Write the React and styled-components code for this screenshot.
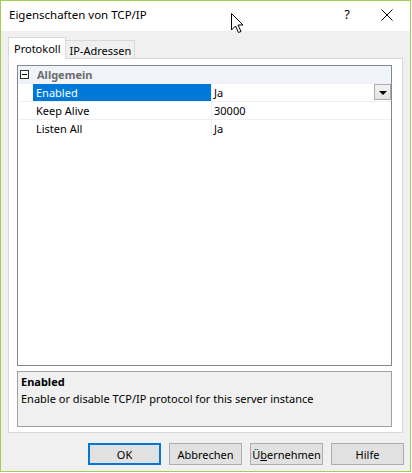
import React from 'react';
import styled, { createGlobalStyle } from 'styled-components';

const GlobalStyle = createGlobalStyle`
  html, body {
    margin: 0;
    padding: 0;
    background: #ffffff;
  }
  body {
    font-family: 'Noto Sans', 'Open Sans', sans-serif;
    font-size: 11px;
    color: #000;
  }
`;

const Window = styled.div`
  position: relative;
  box-sizing: border-box;
  width: 411px;
  height: 472px;
  border: 1px solid #a2cd55;
  background: #f0f0f0;
  display: flex;
  flex-direction: column;
`;

const TitleBar = styled.div`
  height: 30px;
  background: #ffffff;
  display: flex;
  align-items: center;
  padding-left: 8px;
`;

const Title = styled.div`
  flex: 1;
  font-size: 11.5px;
  padding-bottom: 3px;
`;

const HelpBtn = styled.div`
  width: 34px;
  height: 30px;
  display: flex;
  align-items: center;
  justify-content: center;
  font-size: 13px;
  padding-bottom: 4px;
  box-sizing: border-box;
`;

const CloseBtn = styled.div`
  width: 46px;
  height: 30px;
  display: flex;
  align-items: center;
  justify-content: center;
  padding-bottom: 3px;
  box-sizing: border-box;
`;

const Body = styled.div`
  flex: 1;
  display: flex;
  flex-direction: column;
  padding: 6px 7px 0 7px;
`;

const TabStrip = styled.div`
  display: flex;
  align-items: flex-end;
  height: 22px;
  margin-bottom: -1px;
  position: relative;
  z-index: 1;
`;

const Tab = styled.div`
  box-sizing: border-box;
  height: ${({ active }) => (active ? '22px' : '19px')};
  padding: ${({ active }) => (active ? '3px 5px 0 5px' : '2px 3px 0 3px')};
  background: ${({ active }) => (active ? '#ffffff' : '#f0f0f0')};
  border: 1px solid #d9d9d9;
  border-bottom: ${({ active }) => (active ? '1px solid #ffffff' : '1px solid #d9d9d9')};
  margin-left: ${({ active }) => (active ? '0' : '-1px')};
  white-space: nowrap;
`;

const Panel = styled.div`
  box-sizing: border-box;
  height: 375px;
  border: 1px solid #d9d9d9;
  background: #ffffff;
  padding: 6px 10px 5px 8px;
  display: flex;
  flex-direction: column;
  gap: 5px;
`;

const Grid = styled.div`
  box-sizing: border-box;
  height: 301px;
  border: 1px solid #828790;
  background: #ffffff;
`;

const CategoryRow = styled.div`
  height: 17px;
  display: flex;
  align-items: center;
  background: #f0f3f9;
`;

const Toggle = styled.div`
  box-sizing: border-box;
  width: 9px;
  height: 9px;
  margin: 0 6px 0 2px;
  border: 1px solid #2b2b2b;
  background: #ffffff;
  display: flex;
  align-items: center;
  justify-content: center;
  &::after {
    content: '';
    width: 5px;
    height: 1px;
    background: #000;
  }
`;

const CategoryName = styled.span`
  font-weight: bold;
  color: #6d6d6d;
  padding-left: 2px;
`;

const Row = styled.div`
  height: 17px;
  display: flex;
  border-top: 1px solid #f0f0f0;
`;

const Margin = styled.div`
  width: 15px;
`;

const Label = styled.div`
  width: 175px;
  padding-left: 3px;
  display: flex;
  align-items: center;
  background: ${({ selected }) => (selected ? '#0078d7' : 'transparent')};
  color: ${({ selected }) => (selected ? '#ffffff' : '#000000')};
  border-right: 1px solid #f0f0f0;
`;

const Value = styled.div`
  flex: 1;
  display: flex;
  align-items: center;
  padding-left: 2px;
  position: relative;
`;

const DropBtn = styled.div`
  position: absolute;
  right: 0;
  top: 0;
  box-sizing: border-box;
  width: 17px;
  height: 16px;
  border: 1px solid #acacac;
  background: linear-gradient(#f2f2f2, #e2e2e2);
  display: flex;
  align-items: center;
  justify-content: center;
  &::after {
    content: '';
    border-left: 4px solid transparent;
    border-right: 4px solid transparent;
    border-top: 4px solid #000;
    margin-top: 1px;
  }
`;

const DescPane = styled.div`
  box-sizing: border-box;
  height: 56px;
  border: 1px solid #a0a0a0;
  background: #f0f0f0;
  padding: 1px 3px;
  line-height: 17px;
`;

const DescTitle = styled.div`
  font-weight: bold;
`;

const Footer = styled.div`
  display: flex;
  justify-content: flex-end;
  gap: 8px;
  padding-top: 10px;
  margin-right: -1px;
`;

const Button = styled.div`
  box-sizing: border-box;
  width: 73px;
  height: 22px;
  display: flex;
  align-items: center;
  justify-content: center;
  background: #e1e1e1;
  border: 1px solid ${({ primary }) => (primary ? '#0078d7' : '#adadad')};
  box-shadow: ${({ primary }) => (primary ? 'inset 0 0 0 1px #0078d7' : 'none')};
`;

const Cursor = styled.svg`
  position: absolute;
  left: 229px;
  top: 11px;
`;

const props = [
  { name: 'Enabled', value: 'Ja', selected: true },
  { name: 'Keep Alive', value: '30000' },
  { name: 'Listen All', value: 'Ja' },
];

export default function App() {
  return (
    <>
      <GlobalStyle />
      <Window>
        <TitleBar>
          <Title>Eigenschaften von TCP/IP</Title>
          <HelpBtn>?</HelpBtn>
          <CloseBtn>
            <svg width="12" height="12" viewBox="0 0 12 12">
              <path d="M0.5 0.5 L11.5 11.5 M11.5 0.5 L0.5 11.5" stroke="#000" strokeWidth="1" />
            </svg>
          </CloseBtn>
        </TitleBar>
        <Body>
          <TabStrip>
            <Tab active>Protokoll</Tab>
            <Tab>IP-Adressen</Tab>
          </TabStrip>
          <Panel>
            <Grid>
              <CategoryRow>
                <Toggle />
                <CategoryName>Allgemein</CategoryName>
              </CategoryRow>
              {props.map((p) => (
                <Row key={p.name}>
                  <Margin />
                  <Label selected={p.selected}>{p.name}</Label>
                  <Value>
                    {p.value}
                    {p.selected && <DropBtn />}
                  </Value>
                </Row>
              ))}
            </Grid>
            <DescPane>
              <DescTitle>Enabled</DescTitle>
              <div>Enable or disable TCP/IP protocol for this server instance</div>
            </DescPane>
          </Panel>
          <Footer>
            <Button primary>OK</Button>
            <Button>Abbrechen</Button>
            <Button>Ü<u>b</u>ernehmen</Button>
            <Button>Hilfe</Button>
          </Footer>
        </Body>
        <Cursor width="14" height="22" viewBox="0 0 14 22">
          <path
            d="M1.5 1.5 L1.5 18 L5.5 14 L8.5 20.5 L11 19.5 L8 13 L13 13 Z"
            fill="#fff"
            stroke="#000"
            strokeWidth="1"
            strokeLinejoin="miter"
          />
        </Cursor>
      </Window>
    </>
  );
}
